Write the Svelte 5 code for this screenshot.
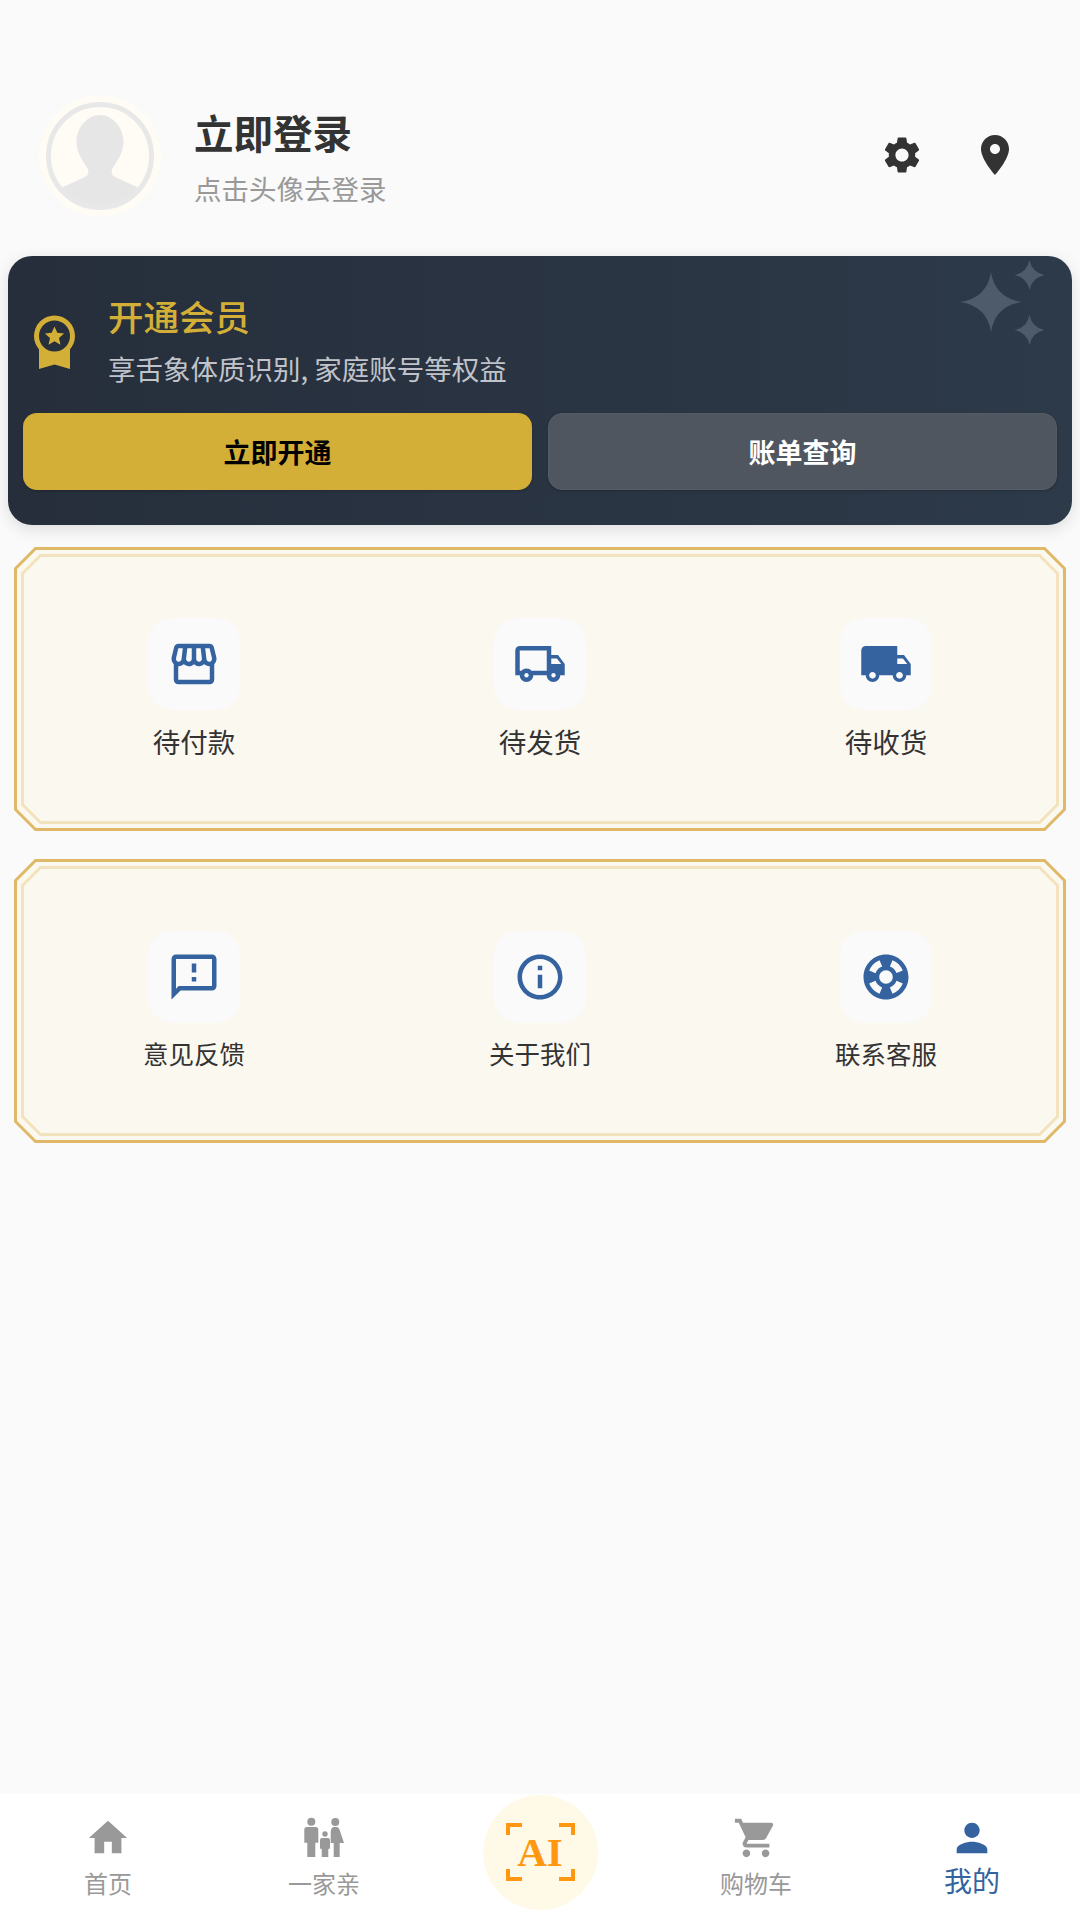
<script>
    const ICONS = {
        store: 'M21.9 8.89l-1.05-4.37c-.22-.9-1-1.52-1.91-1.52H5.05c-.9 0-1.69.63-1.9 1.52L2.1 8.89c-.24 1.02-.02 2.06.62 2.88.08.11.19.19.28.29V19c0 1.1.9 2 2 2h14c1.1 0 2-.9 2-2v-6.94c.09-.09.2-.18.28-.28.64-.82.87-1.87.62-2.89zm-2.99-3.9l1.05 4.37c.1.42.01.84-.25 1.17-.14.18-.44.47-.94.47-.61 0-1.14-.49-1.21-1.14L16.98 5l1.93-.01zM13 5h1.96l.54 4.52c.05.39-.07.78-.33 1.07-.22.26-.54.41-.95.41-.67 0-1.22-.59-1.22-1.31V5zM8.49 9.52L9.04 5H11v4.69c0 .72-.55 1.31-1.29 1.31-.34 0-.65-.15-.89-.41-.25-.29-.37-.68-.33-1.07zm-4.45-.16L5.05 5h1.97l-.58 4.86c-.08.65-.6 1.14-1.21 1.14-.49 0-.8-.29-.93-.47-.27-.32-.36-.75-.26-1.17zM5 19v-6.03c.08.01.15.03.23.03.87 0 1.66-.36 2.24-.95.6.6 1.4.95 2.31.95.87 0 1.65-.36 2.23-.93.59.57 1.39.93 2.29.93.84 0 1.64-.35 2.24-.95.58.59 1.37.95 2.24.95.08 0 .15-.02.23-.03V19H5z',
        truckOutline: 'M20 8h-3V4H3c-1.1 0-2 .9-2 2v11h2c0 1.66 1.34 3 3 3s3-1.34 3-3h6c0 1.66 1.34 3 3 3s3-1.34 3-3h2v-5l-3-4zm-.5 1.5l1.96 2.5H17V9.5h2.5zM6 18c-.55 0-1-.45-1-1s.45-1 1-1 1 .45 1 1-.45 1-1 1zm2.22-3c-.55-.61-1.33-1-2.22-1s-1.67.39-2.22 1H3V6h12v9H8.22zM18 18c-.55 0-1-.45-1-1s.45-1 1-1 1 .45 1 1-.45 1-1 1z',
        truck: 'M20 8h-3V4H3c-1.1 0-2 .9-2 2v11h2c0 1.66 1.34 3 3 3s3-1.34 3-3h6c0 1.66 1.34 3 3 3s3-1.34 3-3h2v-5l-3-4zM6 18.5c-.83 0-1.5-.67-1.5-1.5s.67-1.5 1.5-1.5 1.5.67 1.5 1.5-.67 1.5-1.5 1.5zm13.5-9l1.96 2.5H17V9.5h2.5zm-1.5 9c-.83 0-1.5-.67-1.5-1.5s.67-1.5 1.5-1.5 1.5.67 1.5 1.5-.67 1.5-1.5 1.5z',
        feedback: 'M20 2H4c-1.1 0-1.99.9-1.99 2L2 22l4-4h14c1.1 0 2-.9 2-2V4c0-1.1-.9-2-2-2zm0 14H5.17L4 17.17V4h16v12zm-9-4h2v2h-2zm0-6h2v4h-2z',
        info: 'M11 7h2v2h-2zm0 4h2v6h-2zm1-9C6.48 2 2 6.48 2 12s4.48 10 10 10 10-4.48 10-10S17.52 2 12 2zm0 18c-4.41 0-8-3.59-8-8s3.59-8 8-8 8 3.59 8 8-3.59 8-8 8z',
        support: 'M12,2C6.48,2,2,6.48,2,12c0,5.52,4.48,10,10,10s10-4.48,10-10C22,6.48,17.52,2,12,2z M19.46,9.12l-2.78,1.15 c-0.51-1.36-1.58-2.44-2.95-2.94l1.15-2.78C16.98,5.35,18.65,7.02,19.46,9.12z M12,15c-1.66,0-3-1.34-3-3s1.34-3,3-3s3,1.34,3,3 S13.66,15,12,15z M9.13,4.54l1.17,2.78c-1.38,0.5-2.47,1.59-2.98,2.97L4.54,9.13C5.35,7.02,7.02,5.35,9.13,4.54z M4.54,14.87 l2.78-1.15c0.51,1.38,1.59,2.46,2.97,2.96l-1.17,2.78C7.02,18.65,5.35,16.98,4.54,14.87z M14.88,19.46l-1.15-2.78 c1.37-0.51,2.45-1.59,2.95-2.97l2.78,1.17C18.65,16.98,16.98,18.65,14.88,19.46z',
        settings: 'M19.14 12.94c.04-.3.06-.61.06-.94 0-.32-.02-.64-.07-.94l2.03-1.58c.18-.14.23-.41.12-.61l-1.92-3.32c-.12-.22-.37-.29-.59-.22l-2.39.96c-.5-.38-1.03-.7-1.62-.94l-.36-2.54c-.04-.24-.24-.41-.48-.41h-3.84c-.24 0-.43.17-.47.41l-.36 2.54c-.59.24-1.13.57-1.62.94l-2.39-.96c-.22-.08-.47 0-.59.22L2.74 8.87c-.12.21-.08.47.12.61l2.03 1.58c-.05.3-.09.63-.09.94s.02.64.07.94l-2.03 1.58c-.18.14-.23.41-.12.61l1.92 3.32c.12.22.37.29.59.22l2.39-.96c.5.38 1.03.7 1.62.94l.36 2.54c.05.24.24.41.48.41h3.84c.24 0 .44-.17.47-.41l.36-2.54c.59-.24 1.13-.56 1.62-.94l2.39.96c.22.08.47 0 .59-.22l1.92-3.32c.12-.22.07-.47-.12-.61l-2.01-1.58zM12 15.6c-1.98 0-3.6-1.62-3.6-3.6s1.62-3.6 3.6-3.6 3.6 1.62 3.6 3.6-1.62 3.6-3.6 3.6z',
        place: 'M12 2C8.13 2 5 5.13 5 9c0 5.25 7 13 7 13s7-7.75 7-13c0-3.87-3.13-7-7-7zm0 9.5c-1.38 0-2.5-1.12-2.5-2.5s1.12-2.5 2.5-2.5 2.5 1.12 2.5 2.5-1.12 2.5-2.5 2.5z',
        home: 'M10 20v-6h4v6h5v-8h3L12 3 2 12h3v8z',
        cart: 'M7 18c-1.1 0-1.99.9-1.99 2S5.9 22 7 22s2-.9 2-2-.9-2-2-2zM1 2v2h2l3.6 7.59-1.35 2.45c-.16.28-.25.61-.25.96 0 1.1.9 2 2 2h12v-2H7.42c-.14 0-.25-.11-.25-.25l.03-.12.9-1.63h7.45c.75 0 1.41-.41 1.75-1.03l3.58-6.49c.08-.14.12-.31.12-.48 0-.55-.45-1-1-1H5.21l-.94-2H1zm16 16c-1.1 0-1.99.9-1.99 2s.89 2 1.99 2 2-.9 2-2-.9-2-2-2z',
        person: 'M12 12c2.21 0 4-1.79 4-4s-1.79-4-4-4-4 1.79-4 4 1.79 4 4 4zm0 2c-2.67 0-8 1.34-8 4v2h16v-2c0-2.66-5.33-4-8-4z'
    };

    const orders = [
        { label: '待付款', icon: ICONS.store },
        { label: '待发货', icon: ICONS.truckOutline },
        { label: '待收货', icon: ICONS.truck }
    ];
    const services = [
        { label: '意见反馈', icon: ICONS.feedback },
        { label: '关于我们', icon: ICONS.info },
        { label: '联系客服', icon: ICONS.support }
    ];
    const panels = [
        { items: orders, small: false },
        { items: services, small: true }
    ];
</script>

<div class="page">
    <header class="profile">
        <svg class="avatar" viewBox="0 0 122 122">
            <defs>
                <clipPath id="avatar-clip"><circle cx="61" cy="61" r="52" /></clipPath>
            </defs>
            <circle cx="61" cy="61" r="61" fill="#fffcf5" />
            <g clip-path="url(#avatar-clip)">
                <path
                    fill="#e6e6e6"
                    d="M61 20C49 20 37.500 32 37.500 47C37.500 58 44 66 49 74C50 78 49 80 46 82L24 92L24 130L98 130L98 92L76 82C73 80 72 78 73 74C78 66 84.500 58 84.500 47C84.500 32 73 20 61 20z"
                />
            </g>
            <circle cx="61" cy="61" r="51.500" fill="none" stroke="#e8e8e8" stroke-width="5" />
        </svg>
        <div class="who">
            <div class="who-title">立即登录</div>
            <div class="who-sub">点击头像去登录</div>
        </div>
        <div class="actions">
            <svg class="act-gear" viewBox="0 0 24 24"><path d={ICONS.settings} /></svg>
            <svg class="act-pin" viewBox="0 0 24 24"><path d={ICONS.place} /></svg>
        </div>
    </header>

    <section class="vip">
        <svg class="sparkles" viewBox="0 0 90 90">
            <path d="M33 14Q37 40 64 44Q37 48 33 74Q29 48 2 44Q29 40 33 14z" />
            <path d="M71.5 2Q74 14.500 86.500 17Q74 19.500 71.500 32Q69 19.500 56.500 17Q69 14.500 71.500 2z" />
            <path d="M71.500 57Q74 69.500 86.500 72Q74 74.500 71.500 87Q69 74.500 56.500 72Q69 69.500 71.500 57z" />
        </svg>
        <div class="vip-head">
            <svg class="medal" viewBox="0 0 43 54">
                <path fill="#d4af37" d="M6 32H37V54L21.500 49.500L6 54z" />
                <circle cx="21.500" cy="21" r="20.500" fill="#d4af37" />
                <circle cx="21.500" cy="21" r="15.500" fill="#282f3c" />
                <path
                    fill="#d4af37"
                    d="M21.500 11.500l2.800 6.300 6.800.7-5.100 4.500 1.500 6.700-6-3.500-6 3.500 1.500-6.700-5.100-4.500 6.800-.7z"
                />
            </svg>
            <div class="vip-text">
                <div class="vip-title">开通会员</div>
                <div class="vip-sub">享舌象体质识别, 家庭账号等权益</div>
            </div>
        </div>
        <div class="vip-buttons">
            <button class="btn btn-gold">立即开通</button>
            <button class="btn btn-grey">账单查询</button>
        </div>
    </section>

    {#each panels as panel}
        <section class="panel">
            <svg class="frame" viewBox="0 0 1052 284">
                <polygon
                    points="21.500,1.500 1030.500,1.500 1050.500,21.500 1050.500,262.500 1030.500,282.500 21.500,282.500 1.500,262.500 1.500,21.500"
                    fill="#fbf8f0"
                    stroke="#e0b968"
                    stroke-width="3"
                />
                <polygon
                    points="26.500,8.500 1025.500,8.500 1043.500,26.500 1043.500,257.500 1025.500,275.500 26.500,275.500 8.500,257.500 8.500,26.500"
                    fill="none"
                    stroke="#f3e3bd"
                    stroke-width="3"
                />
            </svg>
            <div class="panel-grid">
                {#each panel.items as item}
                    <div class="entry">
                        <div class="tile">
                            <svg viewBox="0 0 24 24"><path d={item.icon} /></svg>
                        </div>
                        <div class="entry-label" class:small={panel.small}>{item.label}</div>
                    </div>
                {/each}
            </div>
        </section>
    {/each}

    <nav class="tabbar">
        <div class="tab">
            <svg class="tab-icon" viewBox="0 0 24 24"><path d={ICONS.home} /></svg>
            <span class="tab-label">首页</span>
        </div>
        <div class="tab">
            <svg class="tab-icon" viewBox="0 0 46 46">
                <circle cx="10.300" cy="6.700" r="4" />
                <path d="M6 12h8.600a2.700 2.700 0 0 1 2.700 2.700V27.700H14.300V42H6.300V27.700H3.300V14.700A2.700 2.700 0 0 1 6 12z" />
                <circle cx="24" cy="19" r="2.700" />
                <path d="M21 23h6a2 2 0 0 1 2 2v8.700H27.300V42H20.700V33.700H19V25a2 2 0 0 1 2-2z" />
                <circle cx="34.300" cy="7" r="4" />
                <path d="M33 12h2.500c1.500 0 2.400 1 2.900 2.300L43 28H38.700V42H32.700V28H29.700V19C29.700 15 30.500 12 33 12z" />
            </svg>
            <span class="tab-label">一家亲</span>
        </div>
        <div class="tab tab-ai">
            <div class="ai-circle">
                <i class="corner tl"></i><i class="corner tr"></i><i class="corner bl"></i><i class="corner br"></i>
                <span class="ai-text">AI</span>
            </div>
        </div>
        <div class="tab">
            <svg class="tab-icon" viewBox="0 0 24 24"><path d={ICONS.cart} /></svg>
            <span class="tab-label">购物车</span>
        </div>
        <div class="tab active">
            <svg class="tab-icon" viewBox="0 0 24 24"><path d={ICONS.person} /></svg>
            <span class="tab-label">我的</span>
        </div>
    </nav>
</div>

<style>
    :global(body) {
        margin: 0;
        background: #fafafa;
    }
    .page {
        min-height: 1920px;
        display: flex;
        flex-direction: column;
        background: #fafafa;
        font-family: 'Noto Sans CJK SC', 'Noto Sans', sans-serif;
    }

    .profile {
        height: 200px;
        padding: 56px 61px 0 39px;
        display: flex;
        align-items: center;
    }
    .avatar {
        width: 122px;
        height: 122px;
        flex-shrink: 0;
    }
    .who {
        margin-left: 33px;
        margin-top: 3px;
        flex: 1;
    }
    .who-title {
        font-size: 39.5px;
        line-height: 48px;
        font-weight: 700;
        color: #333;
    }
    .who-sub {
        margin-top: 12px;
        font-size: 27.500px;
        line-height: 40px;
        color: #999;
    }
    .actions {
        display: flex;
        align-items: center;
        margin-bottom: 3px;
    }
    .actions svg {
        fill: #333;
        display: block;
    }
    .act-gear {
        width: 44px;
        height: 44px;
        margin-right: 47px;
    }
    .act-pin {
        width: 48px;
        height: 48px;
    }

    .vip {
        position: relative;
        margin: 0 8px;
        height: 269px;
        box-sizing: border-box;
        padding: 40px 15px 35px;
        border-radius: 24px;
        background: linear-gradient(90deg, #262e3b 0%, #2d3a49 100%);
        box-shadow: 0 4px 16px rgba(0, 0, 0, 0.12);
        overflow: hidden;
    }
    .sparkles {
        position: absolute;
        top: 2px;
        right: 24px;
        width: 90px;
        height: 90px;
        fill: #4d5b6a;
    }
    .vip-head {
        display: flex;
        align-items: center;
        padding-left: 10px;
        height: 94px;
        margin-bottom: 23px;
    }
    .medal {
        width: 43px;
        height: 54px;
        flex-shrink: 0;
        margin-top: -2px;
    }
    .vip-text {
        margin-left: 32px;
        margin-top: -4px;
    }
    .vip-title {
        font-size: 35.500px;
        line-height: 44px;
        font-weight: 500;
        color: #d4af37;
    }
    .vip-sub {
        margin-top: 10px;
        font-size: 27.500px;
        line-height: 40px;
        color: #c0c4ca;
    }
    .vip-buttons {
        display: flex;
        gap: 16px;
    }
    .btn {
        flex: 1;
        height: 77px;
        border-radius: 14px;
        border: 1px solid transparent;
        font-family: inherit;
        font-size: 27px;
        font-weight: 700;
        padding: 0;
        box-shadow: 0 1px 3px rgba(0, 0, 0, 0.2);
    }
    .btn-gold {
        background: #d4af37;
        color: #000;
    }
    .btn-grey {
        background: #50565f;
        border-color: #565c65;
        color: #fff;
    }

    .panel {
        position: relative;
        margin: 22px 14px 0;
        height: 284px;
    }
    .panel + .panel {
        margin-top: 28px;
    }
    .frame {
        position: absolute;
        inset: 0;
        width: 100%;
        height: 100%;
    }
    .panel-grid {
        position: relative;
        display: grid;
        grid-template-columns: repeat(3, 1fr);
        padding: 71px 7px 0;
    }
    .panel + .panel .panel-grid {
        padding-top: 72px;
    }
    .entry {
        display: flex;
        flex-direction: column;
        align-items: center;
    }
    .tile {
        width: 92px;
        height: 92px;
        border-radius: 24px;
        background: #fafafa;
        display: flex;
        align-items: center;
        justify-content: center;
    }
    .tile svg {
        width: 54px;
        height: 54px;
        fill: #35639f;
    }
    .entry-label {
        margin-top: 11px;
        font-size: 27.500px;
        line-height: 40px;
        color: #333;
    }
    .entry-label.small {
        margin-top: 10px;
        font-size: 25.500px;
    }

    .tabbar {
        margin-top: auto;
        height: 126px;
        background: #fff;
        display: flex;
    }
    .tab {
        flex: 1;
        display: flex;
        flex-direction: column;
        align-items: center;
        padding-top: 21px;
        color: #999;
    }
    .tab-icon {
        width: 46px;
        height: 46px;
        fill: #999;
        display: block;
    }
    .tab-label {
        margin-top: 5.500px;
        font-size: 24px;
        line-height: 32px;
    }
    .tab.active {
        color: #35639f;
    }
    .tab.active .tab-icon {
        fill: #35639f;
    }
    .tab.active .tab-label {
        margin-top: -1px;
        font-size: 28px;
        line-height: 40px;
    }
    .tab-ai {
        padding-top: 1px;
    }
    .ai-circle {
        position: relative;
        width: 115px;
        height: 115px;
        border-radius: 50%;
        background: #fff9e8;
        display: flex;
        align-items: center;
        justify-content: center;
    }
    .corner {
        position: absolute;
        box-sizing: border-box;
        width: 16px;
        height: 12px;
        border: 0 solid #ff9810;
    }
    .tl {
        left: 23px;
        top: 28px;
        border-width: 4px 0 0 4px;
    }
    .tr {
        right: 23px;
        top: 28px;
        border-width: 4px 4px 0 0;
    }
    .bl {
        left: 23px;
        bottom: 29px;
        border-width: 0 0 4px 4px;
    }
    .br {
        right: 23px;
        bottom: 29px;
        border-width: 0 4px 4px 0;
    }
    .ai-text {
        font-family: 'Liberation Serif', serif;
        font-size: 41px;
        line-height: 1;
        font-weight: 700;
        color: #ff9810;
    }
</style>
